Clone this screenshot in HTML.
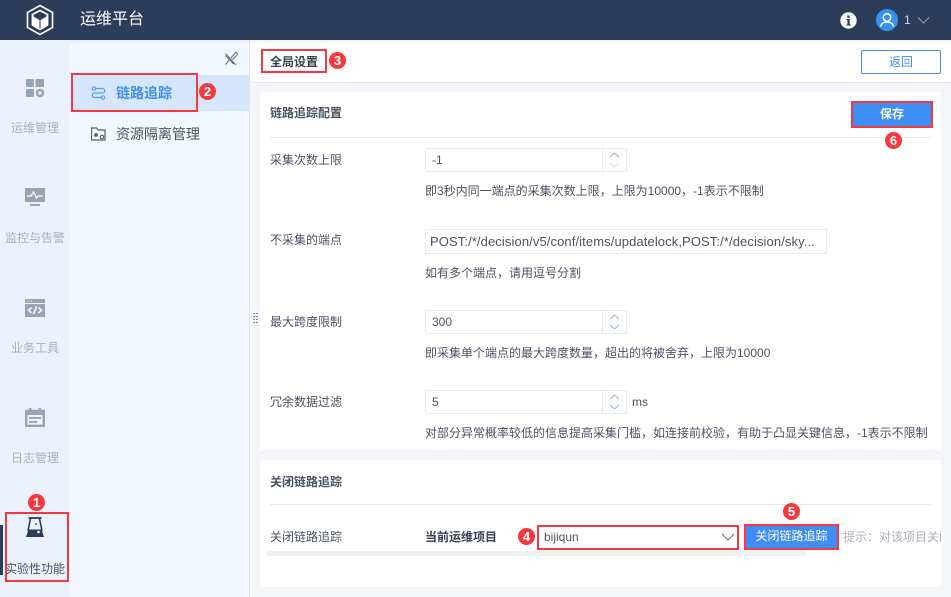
<!DOCTYPE html>
<html lang="zh"><head><meta charset="utf-8"><title>运维平台</title>
<style>
html,body{margin:0;padding:0}
body{width:951px;height:597px;position:relative;overflow:hidden;background:#f5f6f9;font-family:"Liberation Sans","Noto Sans CJK SC",sans-serif;font-size:12px;color:#4b5262}
.a{position:absolute;white-space:nowrap}
.t{position:absolute;white-space:nowrap;line-height:18px;height:18px;margin-top:1px}
.rb{position:absolute;border:2px solid #f5393f;box-sizing:border-box}
.n{position:absolute;width:17px;height:17px;border-radius:50%;background:#f5393f;color:#fff;font:bold 13px/17px "Liberation Sans",sans-serif;text-align:center}
.rail{position:absolute;left:0;width:70px;text-align:center;color:#a9afbb;line-height:18px;white-space:nowrap;margin-top:1px}
.inp{position:absolute;left:425px;width:202px;height:24px;box-sizing:border-box;border:1px solid #e8eaed;background:#fff;border-radius:2px}
.inp span{position:absolute;left:6px;top:2px;line-height:18px;color:#4b5262}
.inp i{position:absolute;right:0;top:0;width:23px;height:22px;border-left:1px solid #e8eaed}
.inp svg{position:absolute;left:6px;top:2px}
</style></head><body>

<div class="a" style="left:0;top:0;width:951px;height:40px;background:#2c3d59"></div>
<svg class="a" style="left:26px;top:4px" width="28" height="32" viewBox="0 0 28 32" fill="none" stroke="#fff">
<path d="M14 1.500L26.500 8.500V23.500L14 30.500L1.500 23.500V8.500Z" stroke-width="1.600"/>
<path d="M14 6.500L21.500 10.500V21L14 25.500L6.500 21V10.500Z" stroke-width="1.800"/>
<path d="M6.500 12L13.500 16V25L6.500 21ZM21.500 12L14.500 16V25L21.500 21Z" fill="#fff" stroke="none"/>
</svg>
<div class="t" style="left:80px;top:9px;font-size:16px;line-height:20px;height:20px;color:#fff">运维平台</div>
<svg class="a" style="left:840px;top:12px" width="17" height="17" viewBox="0 0 17 17"><circle cx="8.500" cy="8.500" r="8.200" fill="#fff"/><rect x="7.300" y="3.500" width="2.400" height="2.300" fill="#2c3d59"/><path d="M6.500 7H9.700V12.500H10.700V13.600H6.500V12.500H7.400V8.100H6.500Z" fill="#2c3d59"/></svg>
<svg class="a" style="left:876px;top:9px" width="22" height="22" viewBox="0 0 22 22"><circle cx="11" cy="11" r="11" fill="#3393f0"/><circle cx="11" cy="8.500" r="3.700" fill="none" stroke="#fff" stroke-width="1.500"/><path d="M4.500 17.500C5.500 14 8 13 11 13S16.500 14 17.500 17.500" fill="none" stroke="#fff" stroke-width="1.500"/></svg>
<div class="t" style="left:904px;top:10px;color:#d5dae3">1</div>
<svg class="a" style="left:917px;top:16px" width="13" height="9" viewBox="0 0 13 9"><path d="M1 1.500L6.500 7L12 1.500" fill="none" stroke="#8d97a8" stroke-width="1.200"/></svg>

<div class="a" style="left:0;top:40px;width:70px;height:557px;background:#ebf2fd"></div>
<div class="a" style="left:70px;top:40px;width:179px;height:557px;background:#f3f7ff"></div>
<div class="a" style="left:249px;top:40px;width:1px;height:557px;background:#dfe3ea"></div>

<svg class="a" style="left:25px;top:78px" width="21" height="20" viewBox="0 0 21 20" fill="#98a3b6"><rect x="1" y="1" width="8" height="8" rx="1"/><rect x="10.500" y="1" width="8.500" height="8" rx="1"/><rect x="1" y="11" width="8" height="8" rx="1"/><circle cx="15" cy="15" r="3" fill="none" stroke="#98a3b6" stroke-width="2.600"/></svg>
<div class="rail" style="top:118px">运维管理</div>
<svg class="a" style="left:25px;top:188px" width="20" height="19" viewBox="0 0 20 19"><path d="M0 0H20V14H0Z" fill="#98a3b6"/><path d="M2 8H6L8.500 4L11.500 10L13 8H18" fill="none" stroke="#ebf2fd" stroke-width="1.500"/><rect x="5" y="16" width="10" height="2" fill="#98a3b6"/></svg>
<div class="rail" style="top:228px">监控与告警</div>
<svg class="a" style="left:25px;top:299px" width="20" height="18" viewBox="0 0 20 18"><rect width="20" height="18" fill="#98a3b6"/><rect x="0" y="4" width="20" height="1" fill="#ebf2fd"/><path d="M2 2H7" stroke="#ebf2fd" stroke-dasharray="1 1"/><path d="M6.500 8.500L3.500 11.200L6.500 14M13.500 8.500L16.500 11.200L13.500 14M11.500 7.500L8.500 15" fill="none" stroke="#ebf2fd" stroke-width="1.800"/></svg>
<div class="rail" style="top:338px">业务工具</div>
<svg class="a" style="left:25px;top:408px" width="20" height="19" viewBox="0 0 20 19"><path d="M1.200 3H18.800V17.800H1.200Z" fill="none" stroke="#98a3b6" stroke-width="2.400"/><rect x="0" y="2" width="20" height="5" fill="#98a3b6"/><rect x="4" y="0" width="2.500" height="3" fill="#98a3b6"/><rect x="13.500" y="0" width="2.500" height="3" fill="#98a3b6"/><rect x="4" y="9" width="12" height="1.800" fill="#98a3b6"/><rect x="4" y="13" width="8" height="1.800" fill="#98a3b6"/></svg>
<div class="rail" style="top:448px">日志管理</div>
<div class="a" style="left:0;top:525px;width:3px;height:50px;background:#2c3d59"></div>
<svg class="a" style="left:26px;top:517px" width="18" height="20" viewBox="0 0 18 20"><path d="M2.500 1H15.500" stroke="#2c3d59" stroke-width="1.800"/><path d="M4.500 1.500L2 14M13.500 1.500L16 14" fill="none" stroke="#2c3d59" stroke-width="1.600"/><path d="M2.500 12.500H15.500L18 20H0Z" fill="#2c3d59"/><circle cx="12.500" cy="15" r="1.300" fill="#fff"/><circle cx="10" cy="7" r=".9" fill="#2c3d59"/></svg>
<div class="rail" style="top:559px;color:#4b5468">实验性功能</div>
<div class="rb" style="left:5px;top:512px;width:64px;height:70px"></div>
<div class="n" style="left:28px;top:494px">1</div>

<div class="a" style="left:72px;top:75px;width:177px;height:36px;background:#d6e7fd"></div>
<svg class="a" style="left:91px;top:86px" width="15" height="14" viewBox="0 0 15 14" fill="none" stroke="#5b9cf5" stroke-width="1.200"><circle cx="3" cy="2.500" r="1.700"/><path d="M5 2.500H11.500C14.500 2.500 14.500 7 11.500 7H3.500C0.500 7 0.500 11.500 3.500 11.500H10"/><circle cx="12" cy="11.500" r="1.700"/></svg>
<div class="t" style="left:116px;top:83px;font-size:14px;font-weight:bold;color:#3f8ef5">链路追踪</div>
<div class="rb" style="left:71px;top:73px;width:127px;height:39px"></div>
<div class="n" style="left:199px;top:83px">2</div>
<svg class="a" style="left:91px;top:127px" width="15" height="14" viewBox="0 0 15 14" fill="none" stroke="#55606f" stroke-width="1.200"><path d="M.5 13V1H5.500L7 3H14V13Z"/><circle cx="5" cy="8" r="1.300" fill="#55606f"/><circle cx="11" cy="10" r="1.700" fill="#f3f7ff"/></svg>
<div class="t" style="left:116px;top:124px;font-size:14px;color:#4b5262">资源隔离管理</div>
<svg class="a" style="left:224px;top:51px" width="14" height="15" viewBox="0 0 14 15" fill="none" stroke="#6a7280" stroke-width="1.100"><path d="M1.500 2.500L8 9.500L9.500 13L1.500 4.500"/><path d="M5 9L1.500 13.500"/><path d="M7 7L11.500 1.500C13 1.500 13.500 3 13 4L8.500 8.500"/><path d="M4 5.500L12 14"/></svg>
<svg class="a" style="left:253px;top:312px" width="6" height="14" viewBox="0 0 6 14" fill="#7b86a8"><path d="M0 1H2V2H0ZM3 1H5V2H3ZM0 4H2V5H0ZM3 4H5V5H3ZM0 7H2V8H0ZM3 7H5V8H3ZM0 10H2V11H0ZM3 10H5V11H3Z"/></svg>

<div class="a" style="left:250px;top:40px;width:701px;height:42px;background:#fff;border-bottom:1px solid #e6e8ec"></div>
<div class="a" style="left:70px;top:40px;width:881px;height:4px;background:linear-gradient(rgba(0,0,0,.05),rgba(0,0,0,0))"></div>
<div class="t" style="left:270px;top:52px;font-weight:bold;color:#3a4150">全局设置</div>
<div class="rb" style="left:261px;top:49px;width:66px;height:24px"></div>
<div class="n" style="left:329px;top:52px">3</div>
<div class="a" style="left:861px;top:50px;width:80px;height:24px;box-sizing:border-box;border:1px solid #3f8ef5;border-radius:2px;background:#fff;text-align:center;line-height:22px;color:#3f8ef5">返回</div>

<div class="a" style="left:260px;top:92px;width:681px;height:358px;background:#fff"></div>
<div class="a" style="left:260px;top:460px;width:681px;height:127px;background:#fff"></div>

<div class="t" style="left:270px;top:103px;font-weight:bold;color:#4b5262">链路追踪配置</div>
<div class="a" style="left:270px;top:137px;width:661px;height:1px;background:#e8eaed"></div>
<div class="a" style="left:851px;top:101px;width:82px;height:27px;background:#3f8ef5;text-align:center;line-height:26px;color:#fff;font-weight:bold">保存</div>
<div class="rb" style="left:851px;top:101px;width:82px;height:27px"></div>
<div class="n" style="left:885px;top:132px">6</div>

<div class="t" style="left:270px;top:150px">采集次数上限</div>
<div class="inp" style="top:148px"><span>-1</span><i><svg width="11" height="18" viewBox="0 0 11 18" fill="none" stroke="#a9afb8"><path d="M1 6L5.500 2L10 6"/><path d="M1 12L5.500 16L10 12" stroke="#d7dbe0"/></svg></i></div>
<div class="t" style="left:425px;top:181px">即3秒内同一端点的采集次数上限，上限为10000，-1表示不限制</div>

<div class="t" style="left:270px;top:230px">不采集的端点</div>
<div class="a" style="left:425px;top:229px;width:402px;height:25px;box-sizing:border-box;border:1px solid #e8eaed;background:#fff;line-height:23px;padding-left:4px;overflow:hidden;color:#4b5262;font-size:13px;letter-spacing:.1px">POST:/*/decision/v5/conf/items/updatelock,POST:/*/decision/sky...</div>
<div class="t" style="left:425px;top:263px">如有多个端点，请用逗号分割</div>

<div class="t" style="left:270px;top:312px">最大跨度限制</div>
<div class="inp" style="top:310px"><span>300</span><i><svg width="11" height="18" viewBox="0 0 11 18" fill="none" stroke="#a9afb8"><path d="M1 6L5.500 2L10 6"/><path d="M1 12L5.500 16L10 12" stroke="#8fb4e6"/></svg></i></div>
<div class="t" style="left:425px;top:343px">即采集单个端点的最大跨度数量，超出的将被舍弃，上限为10000</div>

<div class="t" style="left:270px;top:392px">冗余数据过滤</div>
<div class="inp" style="top:390px"><span>5</span><i><svg width="11" height="18" viewBox="0 0 11 18" fill="none" stroke="#a9afb8"><path d="M1 6L5.500 2L10 6"/><path d="M1 12L5.500 16L10 12" stroke="#8fb4e6"/></svg></i></div>
<div class="t" style="left:632px;top:392px">ms</div>
<div class="t" style="left:425px;top:423px">对部分异常概率较低的信息提高采集门槛，如连接前校验，有助于凸显关键信息，-1表示不限制</div>

<div class="t" style="left:270px;top:472px;font-weight:bold;color:#4b5262">关闭链路追踪</div>
<div class="a" style="left:270px;top:504px;width:661px;height:1px;background:#e8eaed"></div>
<div class="t" style="left:270px;top:527px">关闭链路追踪</div>
<div class="t" style="left:425px;top:527px;font-weight:bold;color:#3a4150">当前运维项目</div>
<div class="n" style="left:518px;top:528px">4</div>
<div class="a" style="left:537px;top:525px;width:202px;height:25px;background:#fff"></div>
<div class="t" style="left:544px;top:527px;color:#4b5262">bijiqun</div>
<svg class="a" style="left:721px;top:533px" width="14" height="9" viewBox="0 0 14 9"><path d="M1 1L7 7L13 1" fill="none" stroke="#6d7480" stroke-width="1.100"/></svg>
<div class="rb" style="left:537px;top:525px;width:202px;height:25px"></div>
<div class="a" style="left:744px;top:524px;width:95px;height:26px;background:#3f8ef5;text-align:center;line-height:25px;color:#fff">关闭链路追踪</div>
<div class="rb" style="left:744px;top:524px;width:95px;height:26px"></div>
<div class="n" style="left:783px;top:503px">5</div>
<div class="a" style="left:843px;top:528px;width:98px;height:18px;line-height:18px;overflow:hidden;color:#a9afb8">提示：对该项目关闭链路追踪</div>
<div class="a" style="left:267px;top:551px;width:539px;height:5px;border-radius:3px;background:#eef0f2"></div>

</body></html>
